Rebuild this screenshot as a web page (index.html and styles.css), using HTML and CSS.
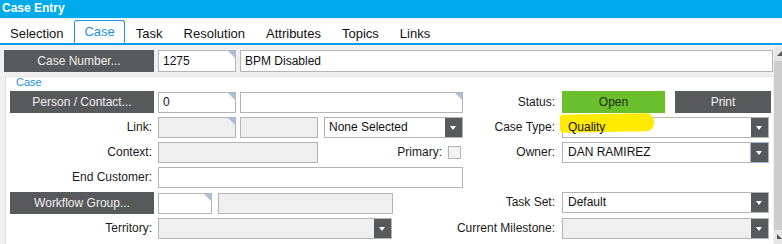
FILE: index.html
```html
<!DOCTYPE html>
<html lang="en">
<head>
    <meta charset="UTF-8">
    <meta name="viewport" content="width=device-width, initial-scale=1.0">
    <title>Case Entry</title>
    <link rel="stylesheet" href="styles.css">
</head>
<body>

    <div class="header">Case Entry</div>

    <div class="tabs">
        <div class="tab">Selection</div>
        <div class="tab active">Case</div>
        <div class="tab">Task</div>
        <div class="tab">Resolution</div>
        <div class="tab">Attributes</div>
        <div class="tab">Topics</div>
        <div class="tab">Links</div>
    </div>

    <div class="main">
        <div class="content">
            <div class="top-row">
                <button class="dark-btn w-col">Case Number...</button>
                <div class="field w-id corner">1275</div>
                <div class="field grow">BPM Disabled</div>
            </div>

            <div class="panel">
                <div class="legend">Case</div>

                <div class="row r1">
                    <div class="left">
                        <button class="dark-btn w-col">Person / Contact...</button>
                        <div class="field w-id corner">0</div>
                        <div class="field grow corner"></div>
                    </div>
                    <div class="rlabel">Status:</div>
                    <div class="right">
                        <button class="status-btn">Open</button>
                        <button class="dark-btn print-btn">Print</button>
                    </div>
                </div>

                <div class="row">
                    <div class="left">
                        <div class="label w-col">Link:</div>
                        <div class="field w-id off corner"></div>
                        <div class="field w-id off"></div>
                        <div class="select w-none">None Selected<span class="arrow"></span></div>
                    </div>
                    <div class="rlabel">Case Type:</div>
                    <div class="right">
                        <div class="select grow">
                            <span class="marker"></span>
                            <span class="sel-text">Quality</span>
                            <span class="arrow"></span>
                        </div>
                    </div>
                </div>

                <div class="row">
                    <div class="left">
                        <div class="label w-col">Context:</div>
                        <div class="field w-context off"></div>
                        <div class="label grow">Primary:</div>
                        <div class="check"></div>
                    </div>
                    <div class="rlabel">Owner:</div>
                    <div class="right">
                        <div class="select grow">DAN RAMIREZ<span class="arrow focus"></span></div>
                    </div>
                </div>

                <div class="row">
                    <div class="left">
                        <div class="label w-col">End Customer:</div>
                        <div class="field grow"></div>
                    </div>
                    <div class="rlabel"></div>
                    <div class="right"></div>
                </div>

                <div class="row r5">
                    <div class="left">
                        <button class="dark-btn w-col">Workflow Group...</button>
                        <div class="field w-wf corner"></div>
                        <div class="field w-wf2 off"></div>
                    </div>
                    <div class="rlabel">Task Set:</div>
                    <div class="right">
                        <div class="select grow">Default<span class="arrow"></span></div>
                    </div>
                </div>

                <div class="row">
                    <div class="left">
                        <div class="label w-col">Territory:</div>
                        <div class="select off w-terr"><span class="arrow"></span></div>
                    </div>
                    <div class="rlabel">Current Milestone:</div>
                    <div class="right">
                        <div class="select off grow"><span class="arrow"></span></div>
                    </div>
                </div>
            </div>
        </div>

        <div class="scrollbar">
            <div class="sb-btn">
                <svg width="8" height="8" viewBox="0 0 8 8"><polygon points="3,6 8,1 8,6" fill="#555"/></svg>
            </div>
            <div class="sb-track"></div>
            <div class="sb-btn">
                <svg width="8" height="8" viewBox="0 0 8 8"><polygon points="3,1 8,6 3,6" fill="#555"/></svg>
            </div>
        </div>
    </div>

</body>
</html>
```

FILE: styles.css
```css
body {
    margin: 0;
    width: 782px;
    height: 244px;
    overflow: hidden;
    font-family: "Liberation Sans", Arial, sans-serif;
    font-size: 12px;
    color: #1a1a1a;
    background-color: #f0f0f0;
}
.header {
    height: 18px;
    line-height: 17px;
    padding-left: 2px;
    background-color: #00abeb;
    color: white;
    font-weight: bold;
}
.tabs {
    display: flex;
    align-items: flex-end;
    gap: 1px;
    box-sizing: border-box;
    height: 27px;
    padding-left: 0;
    background: white;
    border-top: 1px solid #ececec;
    border-bottom: 2px solid #0c9be6;
}
.tab {
    height: 22px;
    line-height: 26px;
    padding: 0 10px;
    font-size: 13px;
    color: #111;
}
.tab.active {
    line-height: 22px;
    padding: 0 9px;
    color: #1e8fe0;
    border: 1px solid #1e96e6;
    border-bottom: none;
    border-radius: 3px 3px 0 0;
}
.main {
    display: flex;
    height: 199px;
}
.content {
    flex: 1;
    padding: 5px 1px 0 4px;
}
button {
    font-family: inherit;
    font-size: 12px;
    border: none;
    margin: 0;
    padding: 0;
    cursor: pointer;
}
.dark-btn {
    background-color: #58595b;
    color: #f0f0f0;
    height: 22px;
}
.top-row {
    display: flex;
    gap: 4px;
    height: 22px;
}
.w-col {
    width: 150px;
    flex: none;
}
.field {
    position: relative;
    box-sizing: border-box;
    height: 21px;
    line-height: 19px;
    padding: 0 4px;
    border: 1px solid #b4b4b4;
    background: white;
    color: #111;
    flex: none;
}
.top-row .field {
    height: 22px;
    line-height: 20px;
}
.field.off {
    background-color: #efefef;
}
.corner::after {
    content: "";
    position: absolute;
    top: 0;
    right: 0;
    border-top: 7px solid #a9c1e0;
    border-left: 7px solid transparent;
}
.grow {
    flex: 1;
}
.w-id {
    width: 78px;
}
.panel {
    margin: 4px 0 0 1px;
    padding: 0 0 20px 4px;
    background: white;
    border-left: 1px solid #dedede;
    border-top: 1px solid #e4e4e4;
    display: flex;
    flex-direction: column;
    gap: 4px;
}
.legend {
    height: 10px;
    line-height: 11px;
    padding-left: 6px;
    font-size: 11px;
    color: #1e8fe0;
}
.row {
    display: flex;
    align-items: flex-start;
    height: 21px;
}
.row.r1, .row.r5 {
    height: 22px;
}
.left {
    display: flex;
    gap: 4px;
    width: 453px;
    flex: none;
}
.left .w-col {
    width: 144px;
}
.r1 .field, .r5 .field {
    margin-top: 1px;
}
.label {
    box-sizing: border-box;
    height: 21px;
    line-height: 21px;
    padding-right: 2px;
    text-align: right;
    color: #1a1a1a;
}
.rlabel {
    display: flex;
    justify-content: flex-end;
    width: 92px;
    flex: none;
    height: 21px;
    line-height: 21px;
    white-space: nowrap;
    margin-right: 7px;
}
.r1 .rlabel {
    line-height: 22px;
}
.right {
    display: flex;
    width: 209px;
    flex: none;
}
.select {
    position: relative;
    box-sizing: border-box;
    height: 21px;
    line-height: 19px;
    padding: 0 20px 0 4px;
    border: 1px solid #b4b4b4;
    background: white;
    color: #111;
    flex: none;
}
.right .select {
    flex: none;
    width: 207px;
    padding-left: 5px;
}
.select.off {
    background-color: #efefef;
}
.w-none {
    width: 139px;
    margin-left: 2px;
}
.arrow {
    position: absolute;
    top: 0;
    right: 0;
    bottom: 0;
    width: 17px;
    background-color: #58595b;
}
.arrow::after {
    content: "";
    position: absolute;
    left: 5px;
    top: 8px;
    border-top: 4px solid white;
    border-left: 3.5px solid transparent;
    border-right: 3.5px solid transparent;
}
.arrow.focus {
    box-shadow: 0 0 0 1px #9fb3d4;
}
.marker {
    position: absolute;
    left: -3px;
    top: -4px;
    width: 94px;
    height: 18px;
    background-color: #ffea00;
    border-radius: 3px 8px 8px 3px;
    transform: rotate(-1deg);
}
.sel-text {
    position: relative;
}
.status-btn {
    width: 103px;
    height: 22px;
    background-color: #6abf2c;
    color: #1d2a10;
}
.print-btn {
    width: 96px;
    margin-left: 10px;
}
.w-context {
    width: 160px;
}
.check {
    width: 13px;
    height: 13px;
    box-sizing: border-box;
    margin: 4px 2px 0 0;
    border: 1px solid #b4b4b4;
    background: #f2f2f2;
    flex: none;
}
.w-wf {
    width: 54px;
}
.w-wf2 {
    width: 175px;
    margin-left: 2px;
}
.w-terr {
    width: 234px;
}
.scrollbar {
    width: 8px;
    margin-top: 2px;
    display: flex;
    flex-direction: column;
    background: #cdcdcd;
}
.sb-btn {
    height: 14px;
    background: #e6e6e6;
    display: flex;
    align-items: center;
}
.sb-track {
    flex: 1;
    background: #cdcdcd;
}
```
